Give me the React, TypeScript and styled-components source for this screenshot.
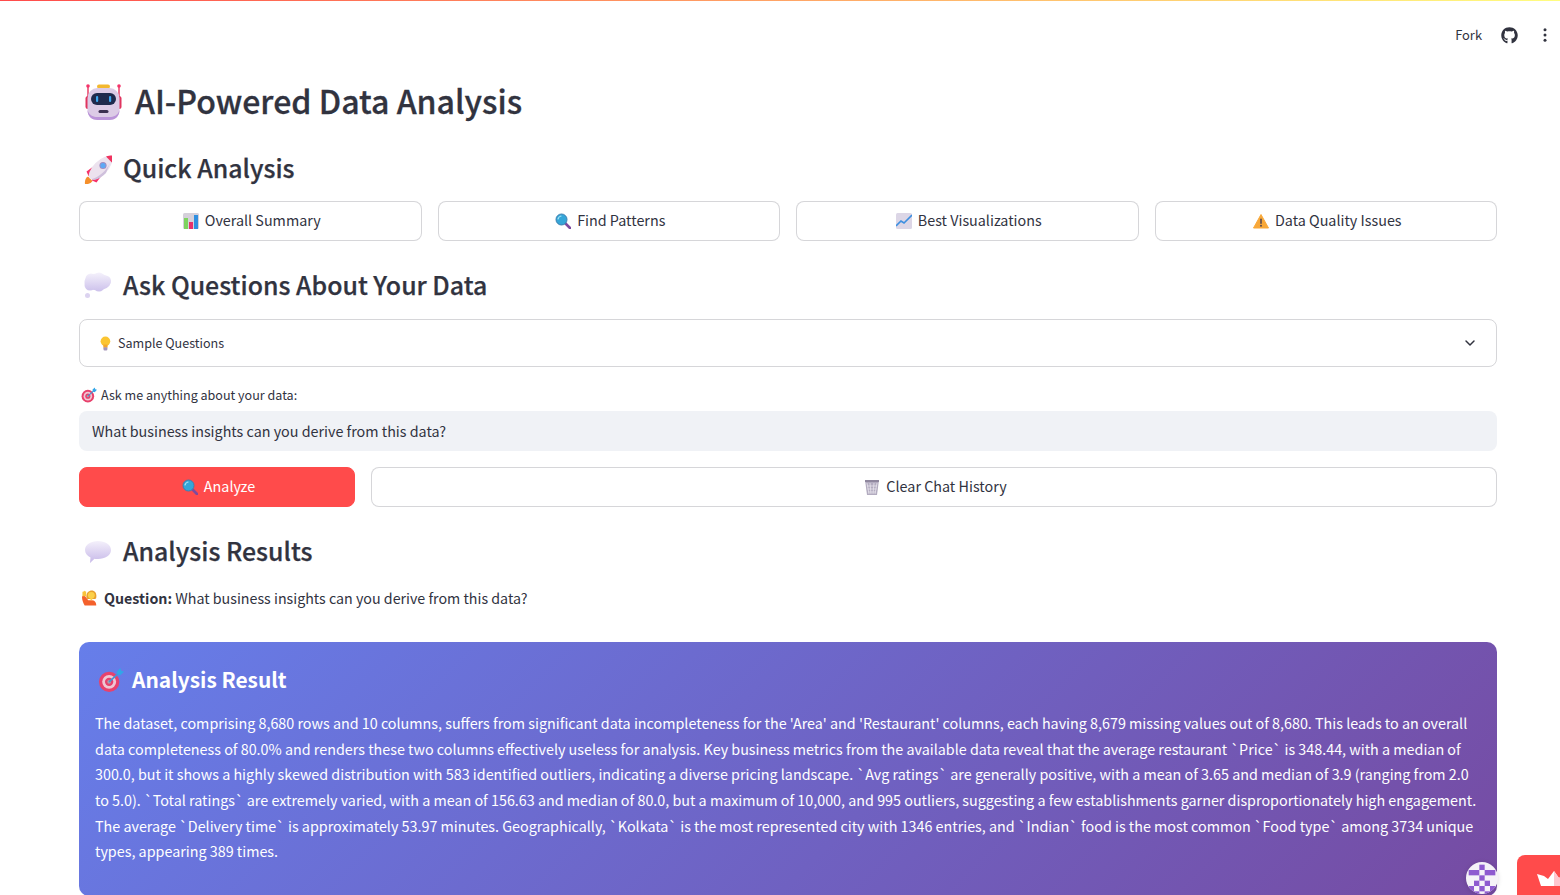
import styled, { createGlobalStyle } from 'styled-components';
import { FaGithub } from 'react-icons/fa';
import { ChevronDown } from 'lucide-react';

const FONT = `"Noto Sans CJK JP", "Noto Sans", sans-serif`;

const GlobalStyle = createGlobalStyle`
  html, body {
    margin: 0;
    height: 100%;
    overflow: hidden;
    background: #fff;
  }
  body {
    font-family: ${FONT};
    color: #31333f;
  }
  * { box-sizing: border-box; }
`;

const Shell = styled.div`
  position: relative;
  height: 100vh;
  overflow: hidden;
`;

const Decoration = styled.div`
  height: 1px;
  background: linear-gradient(90deg, #ff4b4b, #fffd80);
`;

const Toolbar = styled.header`
  height: 69px;
  padding: 0 7px 1px 0;
  display: flex;
  align-items: center;
  justify-content: flex-end;
  gap: 19px;
  font-size: 12.9px;
  svg { display: block; }
`;

const Main = styled.main`
  padding: 0 63px 0 79px;
`;

// the CJK family sits low in its line box, so text is nudged up inside the flex rows
const Label = styled.span<{ $lift?: number }>`
  margin-bottom: ${(p) => p.$lift ?? 2}px;
`;

const Title = styled.h1`
  margin: 10px 0 0;
  display: flex;
  align-items: center;
  gap: 12px;
  padding-left: 4px;
  height: 44px;
  font-size: 32.1px;
  line-height: 44px;
  font-weight: 500;
  -webkit-text-stroke: 0.3px #31333f;
`;

const Heading = styled.h2`
  margin: 25px 0 12px;
  display: flex;
  align-items: center;
  gap: 11px;
  padding-left: 3px;
  height: 40px;
  font-size: 24.9px;
  line-height: 40px;
  font-weight: 500;
  -webkit-text-stroke: 0.25px #31333f;
`;

const QuickRow = styled.div`
  display: grid;
  grid-template-columns: repeat(4, 1fr);
  gap: 16px;
`;

const ActionRow = styled.div`
  display: grid;
  grid-template-columns: 276px 1fr;
  gap: 16px;
  margin-top: 16px;
`;

const Button = styled.button<{ $primary?: boolean }>`
  height: 40px;
  display: flex;
  align-items: center;
  justify-content: center;
  gap: 6px;
  border-radius: 8px;
  font-family: ${FONT};
  font-size: 14.35px;
  padding: 0 12px 0 15px;
  color: ${(p) => (p.$primary ? '#fff' : '#31333f')};
  background: ${(p) => (p.$primary ? '#ff4b4b' : '#fff')};
  border: 1px solid ${(p) => (p.$primary ? '#ff4b4b' : 'rgba(49, 51, 63, 0.2)')};
`;

const Expander = styled.div`
  margin-top: 13px;
  height: 48px;
  padding: 0 18px 0 19px;
  display: flex;
  align-items: center;
  gap: 4px;
  border: 1px solid rgba(49, 51, 63, 0.2);
  border-radius: 8px;
  font-size: 12.55px;
  svg:last-child { margin-left: auto; }
`;

const FieldLabel = styled.label`
  margin-top: 18px;
  height: 20px;
  display: flex;
  align-items: center;
  gap: 4px;
  padding-left: 2px;
  font-size: 12.55px;
`;

const TextField = styled.input`
  display: block;
  margin-top: 6px;
  width: 100%;
  height: 40px;
  padding: 0 13px 2px;
  border: 0;
  border-radius: 8px;
  background: #f0f2f6;
  color: #31333f;
  font-family: ${FONT};
  font-size: 14.33px;
`;

const Question = styled.p`
  margin: 14px 0 0;
  height: 24px;
  display: flex;
  align-items: center;
  gap: 6px;
  padding-left: 3px;
  font-size: 14.25px;
  b { font-weight: 700; }
`;

const ResultCard = styled.section`
  margin-top: 32px;
  padding: 22px 16px 32px;
  border-radius: 10px;
  color: #fff;
  background: linear-gradient(135deg, #667eea 0%, #764ba2 100%);
`;

const ResultTitle = styled.h3`
  margin: 0;
  height: 32px;
  display: flex;
  align-items: center;
  gap: 8px;
  padding-left: 3px;
  font-size: 20.9px;
  line-height: 32px;
  font-weight: 700;
`;

const ResultText = styled.p`
  margin: 14.2px 0 0;
  font-size: 14.33px;
  line-height: 25.6px;
`;

const Avatar = styled.div`
  position: absolute;
  left: 1466px;
  top: 862px;
  width: 32px;
  height: 32px;
  border-radius: 50%;
  overflow: hidden;
  background: #f5f3f8;
  box-shadow: 0 1px 5px rgba(0, 0, 0, 0.15);
  svg { display: block; }
`;

const HostBadge = styled.div`
  position: absolute;
  left: 1517px;
  top: 855px;
  width: 60px;
  height: 60px;
  padding: 16px 0 0 20px;
  border-radius: 8px;
  background: #ff4b4b;
  svg { display: block; }
`;

type IconProps = { size?: number };

const Robot = ({ size = 40 }: IconProps) => (
  <svg width={size} height={size} viewBox="0 0 40 40">
    <path d="M5 5v12M36 5v12" stroke="#e6325e" strokeWidth="1.400" />
    <circle cx="5" cy="4" r="1.800" fill="#f5336a" />
    <circle cx="36" cy="4" r="1.800" fill="#f5336a" />
    <rect x="14" y="2.500" width="13" height="4" rx="2" fill="#f3b82e" />
    <rect x="2.500" y="14" width="6" height="13" rx="2.500" fill="#e0355f" />
    <rect x="32.500" y="14" width="6" height="13" rx="2.500" fill="#e0355f" />
    <rect x="4.500" y="6" width="32" height="32" rx="10" fill="#dccbe6" />
    <path d="M4.500 28c0 7 5 10 10 10h12c5 0 10-3 10-10-2 6-6 7-10 7h-12c-4 0-8-1-10-7z" fill="#bb94d9" />
    <rect x="8" y="11" width="25" height="12" rx="6" fill="#1f2a4d" />
    <rect x="13" y="14" width="2.200" height="6" rx="1.100" fill="#3ca7f0" />
    <rect x="26" y="14" width="2.200" height="6" rx="1.100" fill="#3ca7f0" />
    <rect x="15.500" y="28" width="10" height="3" rx="1.500" fill="#3b2f50" />
  </svg>
);

const Rocket = ({ size = 30 }: IconProps) => (
  <svg width={size} height={size} viewBox="-2 -1 30 30">
    <path d="M1 29c-.5-3 .5-6 3-7.500l4.500 4.500C7 28.500 4 29.500 1 29z" fill="#f58f2a" />
    <path d="M10 11L2.500 16.500l2 4.500 4.500 0zM18 20l-5.500 7.500-4.500-2 0-4.500z" fill="#f5336a" />
    <ellipse cx="16.500" cy="13" rx="15" ry="7" transform="rotate(-45 16.500 13)" fill="#ece2ee" />
    <path d="M8 24c6-1 15-9 18-16l-4 10c-3 3-7 6-12 7z" fill="#cfc0dc" />
    <path d="M22 1.500c3-1 5-1.200 6.800-1 .3 2 0 4-1 7z" fill="#f0335f" />
    <circle cx="19" cy="10.500" r="3.600" fill="#a08dc0" />
    <circle cx="19" cy="10.500" r="2.600" fill="#5fa9f5" />
  </svg>
);

const Bars = ({ size = 16 }: IconProps) => (
  <svg width={size} height={size} viewBox="0 0 16 16">
    <rect width="16" height="16" rx="1.500" fill="#d5d0da" />
    <rect x="1" y="5" width="4" height="11" fill="#7ed45f" />
    <rect x="6" y="9" width="4" height="7" fill="#e8316b" />
    <rect x="11" y="2" width="4" height="14" fill="#2f8fe0" />
  </svg>
);

const Magnifier = ({ size = 16 }: IconProps) => (
  <svg width={size} height={size} viewBox="0 0 16 16">
    <path d="M10 10l5 5" stroke="#7d4a9e" strokeWidth="2.600" strokeLinecap="round" />
    <circle cx="6.500" cy="6.500" r="5.500" fill="#35a6d8" stroke="#3c7fb0" strokeWidth="1" />
    <path d="M3 6c.4-1.600 1.500-2.700 3-3" stroke="#a8e6f7" strokeWidth="1.200" fill="none" strokeLinecap="round" />
  </svg>
);

const TrendUp = ({ size = 16 }: IconProps) => (
  <svg width={size} height={size} viewBox="0 0 16 16">
    <rect width="16" height="16" rx="1.500" fill="#dcd6e6" />
    <path d="M0 13l5-5 3 2 8-8" stroke="#3d8fe0" strokeWidth="1.600" fill="none" />
  </svg>
);

const Warning = ({ size = 16 }: IconProps) => (
  <svg width={size} height={size} viewBox="0 0 16 16">
    <path d="M8 1.500L15.500 15H.5z" fill="#f8a839" stroke="#f8a839" strokeLinejoin="round" />
    <rect x="7.200" y="5.500" width="1.600" height="5.500" rx=".8" fill="#5a4a50" />
    <circle cx="8" cy="12.800" r="1" fill="#5a4a50" />
  </svg>
);

const Thought = ({ size = 30 }: IconProps) => (
  <svg width={size} height={size} viewBox="0 0 30 30">
    <defs>
      <linearGradient id="thoughtFill" gradientUnits="userSpaceOnUse" x1="0" y1="1" x2="0" y2="22">
        <stop offset="0" stopColor="#f6f3fc" />
        <stop offset="1" stopColor="#c9bdea" />
      </linearGradient>
    </defs>
    <g fill="url(#thoughtFill)">
      <ellipse cx="15.500" cy="11" rx="13" ry="8.500" />
      <circle cx="9" cy="8" r="5.500" />
      <circle cx="17" cy="7" r="5.500" />
      <circle cx="23.500" cy="10" r="5.500" />
      <circle cx="8" cy="14" r="5.500" />
      <circle cx="17" cy="15" r="5.500" />
    </g>
    <circle cx="5.500" cy="24.500" r="2.500" fill="#dcd3f0" />
  </svg>
);

const Bulb = ({ size = 15 }: IconProps) => (
  <svg width={size} height={size} viewBox="0 0 14 14">
    <circle cx="6" cy="5" r="4.500" fill="#fbc531" />
    <rect x="4" y="8" width="4" height="3" fill="#f3a72d" />
    <rect x="4.200" y="10.500" width="3.600" height="3" rx="1" fill="#a596b8" />
  </svg>
);

const Target = ({ size = 16 }: IconProps) => (
  <svg width={size} height={size} viewBox="0 0 28 28">
    <circle cx="12" cy="16" r="11" fill="#e8416c" />
    <circle cx="12" cy="16" r="7.500" fill="#efc7d4" />
    <circle cx="12" cy="16" r="4.500" fill="#e8416c" />
    <circle cx="12" cy="16" r="2" fill="#a9a0ad" />
    <path d="M12 16L24 5" stroke="#3f96d8" strokeWidth="1.800" />
    <path d="M20 5l4-4 1 3 3 1-4 4-3-1z" fill="#32a6e8" />
  </svg>
);

const Wastebasket = ({ size = 16 }: IconProps) => (
  <svg width={size} height={size} viewBox="0 0 16 16">
    <path d="M1 1h14l-2 15H3z" fill="#b3acc0" />
    <path d="M3 4l2 11M6 4l1 11M10 4l-1 11M13 4l-2 11M3 7h10M3.500 10h9M4 13h8" stroke="#e7e3ec" strokeWidth=".8" />
    <rect x="1" y="1" width="14" height="2" fill="#8f879e" />
  </svg>
);

const Speech = ({ size = 30 }: IconProps) => (
  <svg width={size} height={size} viewBox="-2 -1 30 30">
    <defs>
      <linearGradient id="speechFill" x1="0" y1="0" x2="0" y2="1">
        <stop offset="0" stopColor="#f4f0fb" />
        <stop offset="1" stopColor="#c6b8e8" />
      </linearGradient>
    </defs>
    <path d="M14 3c7 0 13 3.500 13 9s-6 9-13 9c-1.500 0-2.500 0-3.500-.3L6 25l.5-5.500C3 18 1 15 1 12c0-5.500 6-9 13-9z" fill="url(#speechFill)" />
  </svg>
);

const RaisedHand = ({ size = 16 }: IconProps) => (
  <svg width={size} height={size} viewBox="0 0 18 18">
    <path d="M0 8c0-1.500 3-2 4-.5l3 4h4c3 0 5 2 5 5v1H3C1 14 0 11 0 8z" fill="#f4612c" />
    <path d="M5 9c-1-6 3-8.500 6-8.500s6 2.500 5 8.500l-1 1H6z" fill="#e8a02f" />
    <circle cx="10.500" cy="6" r="3.800" fill="#fbd04a" />
    <rect x="9.500" y="9" width="2" height="2.500" fill="#fbd04a" />
    <path d="M.5 7V2.500a.7.7 0 011.400 0V1.500a.7.7 0 011.400 0V2a.7.7 0 011.400 0V7z" fill="#f8c33c" />
  </svg>
);

const Crown = () => (
  <svg width="33" height="18" viewBox="0 0 33 18">
    <path d="M0 3l7 2 4 3 6-8 5 7 4-3 6-2-5 13H4z" fill="#fff" />
    <path d="M17 0l5 7 4-3 6-2-5 13H17z" fill="#ffc7cf" />
  </svg>
);

const AVATAR_CELLS = [
  [13.33, 2.67],
  [2.67, 8], [8, 8], [18.67, 8], [24, 8],
  [13.33, 13.33],
  [8, 18.67], [18.67, 18.67],
  [2.67, 24], [13.33, 24], [24, 24],
  [8, 29.33], [18.67, 29.33],
];

export default function App() {
  return (
    <Shell>
      <GlobalStyle />
      <Decoration />
      <Toolbar>
        <Label>Fork</Label>
        <FaGithub size={17} color="#31333f" />
        <svg width="16" height="16" viewBox="0 0 16 16" fill="#31333f">
          <circle cx="8" cy="2.700" r="1.500" />
          <circle cx="8" cy="8" r="1.500" />
          <circle cx="8" cy="13.300" r="1.500" />
        </svg>
      </Toolbar>
      <Main>
        <Title><Robot /><Label $lift={4}>AI-Powered Data Analysis</Label></Title>
        <Heading><Rocket /><Label $lift={4}>Quick Analysis</Label></Heading>
        <QuickRow>
          <Button><Bars /><Label $lift={4}>Overall Summary</Label></Button>
          <Button><Magnifier /><Label $lift={4}>Find Patterns</Label></Button>
          <Button><TrendUp /><Label $lift={4}>Best Visualizations</Label></Button>
          <Button><Warning /><Label $lift={4}>Data Quality Issues</Label></Button>
        </QuickRow>
        <Heading><Thought /><Label $lift={4}>Ask Questions About Your Data</Label></Heading>
        <Expander>
          <Bulb />
          <Label>Sample Questions</Label>
          <ChevronDown size={16} color="#31333f" strokeWidth={2.2} />
        </Expander>
        <FieldLabel><Target /><Label>Ask me anything about your data:</Label></FieldLabel>
        <TextField readOnly value="What business insights can you derive from this data?" />
        <ActionRow>
          <Button $primary><Magnifier /><Label $lift={4}>Analyze</Label></Button>
          <Button><Wastebasket /><Label $lift={4}>Clear Chat History</Label></Button>
        </ActionRow>
        <Heading><Speech /><Label $lift={4}>Analysis Results</Label></Heading>
        <Question><RaisedHand /><Label><b>Question:</b> What business insights can you derive from this data?</Label></Question>
        <ResultCard>
          <ResultTitle><Target size={26} /><Label>Analysis Result</Label></ResultTitle>
          <ResultText>
            The dataset, comprising 8,680 rows and 10 columns, suffers from significant data incompleteness for the 'Area' and 'Restaurant' columns, each having 8,679 missing values out of 8,680. This leads to an overall data completeness of 80.0% and renders these two columns effectively useless for analysis. Key business metrics from the available data reveal that the average restaurant `Price` is 348.44, with a median of 300.0, but it shows a highly skewed distribution with 583 identified outliers, indicating a diverse pricing landscape. `Avg ratings` are generally positive, with a mean of 3.65 and median of 3.9 (ranging from 2.0 to 5.0). `Total ratings` are extremely varied, with a mean of 156.63 and median of 80.0, but a maximum of 10,000, and 995 outliers, suggesting a few establishments garner disproportionately high engagement. The average `Delivery time` is approximately 53.97 minutes. Geographically, `Kolkata` is the most represented city with 1346 entries, and `Indian` food is the most common `Food type` among 3734 unique types, appearing 389 times.
          </ResultText>
        </ResultCard>
      </Main>
      <Avatar>
        <svg width="32" height="32" viewBox="0 0 32 32" fill="#8e5bd0">
          {AVATAR_CELLS.map(([x, y]) => <rect key={`${x}-${y}`} x={x} y={y} width="5.34" height="5.34" />)}
        </svg>
      </Avatar>
      <HostBadge><Crown /></HostBadge>
    </Shell>
  );
}
